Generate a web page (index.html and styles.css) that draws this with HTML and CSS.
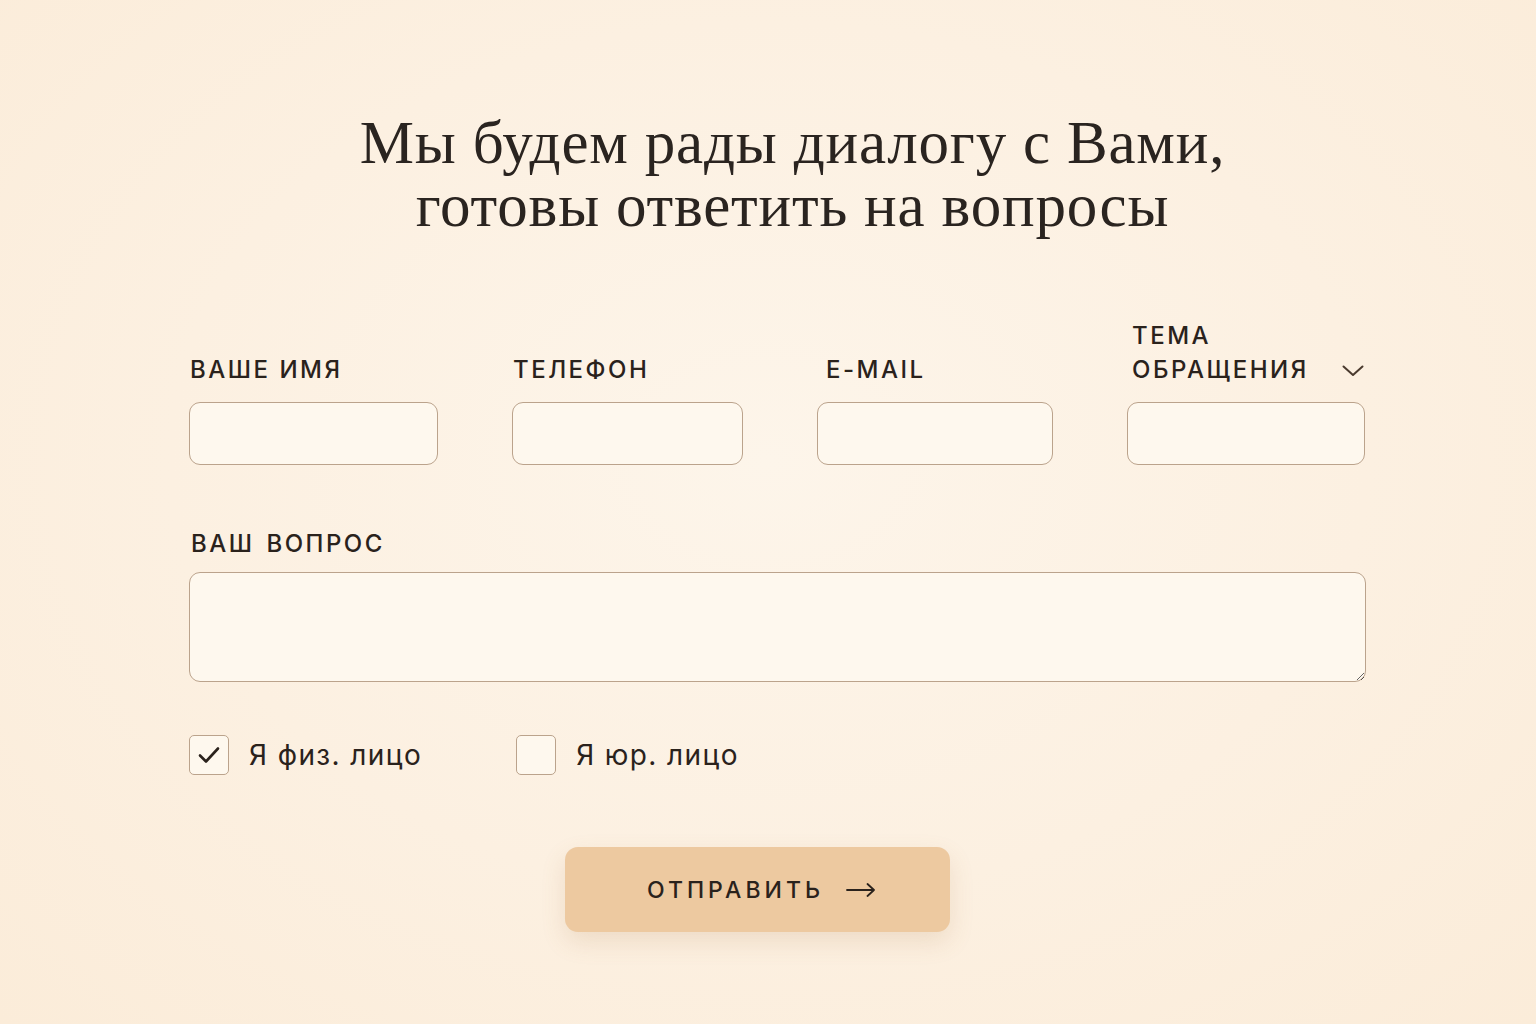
FILE: index.html
```html
<!DOCTYPE html>
<html lang="ru">
<head>
    <meta charset="UTF-8">
    <meta name="viewport" content="width=device-width, initial-scale=1.0">
    <title>Обратная связь</title>
    <link rel="stylesheet" href="styles.css">
</head>
<body>
    <div class="container">
        <h1>Мы будем рады диалогу с Вами,<br>готовы ответить на вопросы</h1>

        <form class="contact-form" onsubmit="return false">
            <div class="fields">
                <div class="field">
                    <label for="name">Ваше имя</label>
                    <input type="text" id="name">
                </div>
                <div class="field">
                    <label for="phone">Телефон</label>
                    <input type="tel" id="phone">
                </div>
                <div class="field field-email">
                    <label for="email">E-mail</label>
                    <input type="email" id="email">
                </div>
                <div class="field field-topic">
                    <label for="topic">
                        <span>Тема<br>обращения</span>
                        <svg class="chevron" width="22" height="12" viewBox="0 0 22 12"><path d="M1.5 1.5 L11 10 L20.5 1.5" fill="none" stroke="#4a3a2e" stroke-width="2" stroke-linecap="round" stroke-linejoin="round"/></svg>
                    </label>
                    <input type="text" id="topic">
                </div>
            </div>

            <div class="field field-question">
                <label for="question">Ваш вопрос</label>
                <textarea id="question"></textarea>
            </div>

            <div class="checks">
                <label class="check">
                    <span class="box checked">
                        <svg width="24" height="20" viewBox="0 0 24 20"><path d="M3 10.5 L9 16.5 L21 3.5" fill="none" stroke="#2a221c" stroke-width="2.6" stroke-linecap="round" stroke-linejoin="round"/></svg>
                    </span>
                    Я физ. лицо
                </label>
                <label class="check">
                    <span class="box"></span>
                    Я юр. лицо
                </label>
            </div>

            <div class="actions">
                <button type="submit" class="submit">
                    Отправить
                    <svg width="30" height="14" viewBox="0 0 30 14"><path d="M1 7 H28 M21.5 1 L28 7 L21.5 13" fill="none" stroke="#2a221c" stroke-width="1.8" stroke-linecap="round" stroke-linejoin="round"/></svg>
                </button>
            </div>
        </form>
    </div>
</body>
</html>
```

FILE: styles.css
```css
body {
    margin: 0;
    min-height: 100vh;
    font-family: Inter, "Noto Sans", Arial, sans-serif;
    color: #2a221c;
    background-color: #fcf0e0;
    background-image: radial-gradient(ellipse at 50% 45%, #fdf5ea 0%, #fcf0e1 55%, #fbecd9 100%);
}
.container {
    width: 1177px;
    margin: 0 auto;
    padding: 111px 0 0 19px;
}
h1 {
    margin: 0 0 82px;
    padding-left: 30px;
    text-align: center;
    font-family: "Liberation Serif", "Times New Roman", serif;
    font-weight: normal;
    font-size: 61px;
    line-height: 63px;
    letter-spacing: 0.8px;
    color: #2a2420;
}
.fields {
    display: grid;
    grid-template-columns: 249px 231px 236px 238px;
    column-gap: 74px;
    align-items: end;
}
.field {
    display: flex;
    flex-direction: column;
}
.field label {
    display: flex;
    align-items: flex-end;
    justify-content: space-between;
    margin-bottom: 15px;
    padding-left: 1px;
    font-size: 24px;
    line-height: 34px;
    font-weight: 500;
    letter-spacing: 2.5px;
    text-transform: uppercase;
    color: #2a221c;
}
.field-email label {
    padding-left: 9px;
}
.field-topic label {
    padding-left: 5px;
}
.field-topic .chevron {
    margin-bottom: 10px;
    margin-right: 1px;
}
.field input,
.field textarea {
    box-sizing: border-box;
    width: 100%;
    height: 63px;
    padding: 0 16px;
    border: 1px solid #bba38c;
    border-radius: 11px;
    background-color: #fef8ee;
    font-family: inherit;
    font-size: 18px;
    color: #2a221c;
    outline: none;
}
.field-question {
    margin-top: 62px;
}
.field-question label {
    margin-bottom: 11px;
    padding-left: 2px;
    word-spacing: 3px;
}
.field textarea {
    height: 110px;
    padding: 14px 16px;
    resize: vertical;
    display: block;
}
.checks {
    display: flex;
    gap: 94px;
    margin-top: 53px;
}
.check {
    display: flex;
    align-items: center;
    gap: 20px;
    font-size: 28px;
    letter-spacing: 1.4px;
    color: #2a221c;
    cursor: pointer;
}
.box {
    box-sizing: border-box;
    width: 40px;
    height: 40px;
    border: 1px solid #bba38c;
    border-radius: 5px;
    background-color: #fef8ee;
    display: flex;
    align-items: center;
    justify-content: center;
}
.actions {
    display: flex;
    justify-content: center;
    margin-top: 72px;
    padding-right: 40px;
}
.submit {
    width: 385px;
    height: 85px;
    display: flex;
    align-items: center;
    justify-content: center;
    gap: 22px;
    padding: 0 0 0 8px;
    border: none;
    border-radius: 13px;
    background-color: #edc9a0;
    box-shadow: 0 10px 24px rgba(170, 120, 70, 0.16);
    font-family: inherit;
    font-size: 23px;
    font-weight: 500;
    letter-spacing: 4px;
    text-transform: uppercase;
    color: #2a221c;
    cursor: pointer;
}
```
